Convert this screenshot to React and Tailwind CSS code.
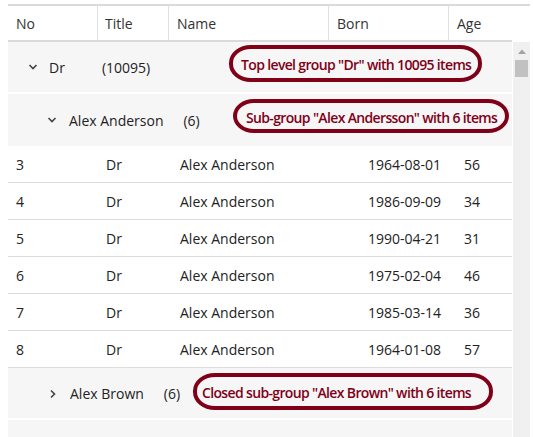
import React from 'react';

const rows = [
  { no: 3, title: 'Dr', name: 'Alex Anderson', born: '1964-08-01', age: 56 },
  { no: 4, title: 'Dr', name: 'Alex Anderson', born: '1986-09-09', age: 34 },
  { no: 5, title: 'Dr', name: 'Alex Anderson', born: '1990-04-21', age: 31 },
  { no: 6, title: 'Dr', name: 'Alex Anderson', born: '1975-02-04', age: 46 },
  { no: 7, title: 'Dr', name: 'Alex Anderson', born: '1985-03-14', age: 36 },
  { no: 8, title: 'Dr', name: 'Alex Anderson', born: '1964-01-08', age: 57 },
];

const ChevronDown = () => (
  <svg width="10" height="6" viewBox="0 0 10 6" className="shrink-0">
    <polyline points="1.5,1 5,4.5 8.5,1" fill="none" stroke="#444" strokeWidth="1.6" />
  </svg>
);

const ChevronRight = () => (
  <svg width="6" height="10" viewBox="0 0 6 10" className="shrink-0">
    <polyline points="1,1.5 4.5,5 1,8.5" fill="none" stroke="#444" strokeWidth="1.6" />
  </svg>
);

const Note = ({ className, children }) => (
  <div
    className={`absolute flex items-center border-[4px] border-[#800018] rounded-[22px/18px] text-[14px] font-semibold tracking-[-0.65px] text-[#800018] whitespace-nowrap ${className}`}
  >
    {children}
  </div>
);

export default function App() {
  return (
    <div
      className="relative w-[533px] h-[437px] overflow-hidden bg-white text-[14px] text-[#222]"
      style={{ fontFamily: '"Open Sans", "Noto Sans", sans-serif' }}
    >
      <div className="ml-[8px] mt-[4px] w-[522px] border-t-2 border-[#dadada]">
        {/* Header */}
        <div className="flex">
          <div className="flex w-[504px] h-[36px] border-b-2 border-[#dadada] text-[#333]">
            <div className="w-[89px] pl-2 pt-px flex items-center">No</div>
            <div className="w-[71px] pl-[7px] pt-px flex items-center border-l border-[#e0e0e0]">Title</div>
            <div className="w-[160px] pl-2 pt-px flex items-center border-l border-[#e0e0e0]">Name</div>
            <div className="w-[120px] pl-2 pt-px flex items-center border-l border-[#e0e0e0]">Born</div>
            <div className="flex-1 pl-2 pt-px flex items-center border-l border-[#e0e0e0]">Age</div>
          </div>
        </div>

        {/* Body */}
        <div className="flex gap-px">
          <div className="w-[504px]">
            {/* top level group */}
            <div className="h-[52px] border-b-2 border-white bg-[#f6f6f6] flex items-center pl-[20px]">
              <ChevronDown />
              <span className="ml-[11px]">Dr</span>
              <span className="ml-[37px]">(10095)</span>
            </div>
            {/* sub-group */}
            <div className="h-[52px] bg-[#f6f6f6] flex items-center pl-[39px]">
              <ChevronDown />
              <span className="ml-[12px]">Alex Anderson</span>
              <span className="ml-[20px]">(6)</span>
            </div>
            {rows.map((r) => (
              <div key={r.no} className="h-[37px] flex items-center border-b border-[#dcdcdc] bg-white">
                <div className="w-[90px] pl-2">{r.no}</div>
                <div className="w-[74px] pl-2">{r.title}</div>
                <div className="w-[188px] pl-2">{r.name}</div>
                <div className="w-[96px] pl-2">{r.born}</div>
                <div className="flex-1 pl-2">{r.age}</div>
              </div>
            ))}
            {/* closed sub-group */}
            <div className="h-[52px] border-b-2 border-white bg-[#f6f6f6] flex items-center pl-[42px] pt-px">
              <ChevronRight />
              <span className="ml-[14px]">Alex Brown</span>
              <span className="ml-[20px]">(6)</span>
            </div>
            <div className="h-[40px] bg-[#f6f6f6]"></div>
          </div>

          {/* Scrollbar */}
          <div className="w-[17px] h-[400px] bg-[#f0f0f0] flex flex-col items-center pt-[7px]">
            <svg width="8" height="5" viewBox="0 0 8 5">
              <polygon points="0,5 4,0.5 8,5" fill="#a3a3a3" />
            </svg>
            <div className="mt-[6px] w-[13px] h-[17px] bg-[#c1c1c1]"></div>
          </div>
        </div>
      </div>

      <Note className="left-[229px] top-[45px] w-[253px] h-[37px] pl-[8px] pt-[2px]">
        Top level group "Dr" with 10095 items
      </Note>
      <Note className="left-[233px] top-[99px] w-[276px] h-[34px] pl-[9px] pt-[2px]">
        Sub-group "Alex Andersson" with 6 items
      </Note>
      <Note className="left-[193px] top-[373px] w-[300px] h-[37px] pl-[5px] pt-[2px]">
        Closed sub-group "Alex Brown" with 6 items
      </Note>
    </div>
  );
}
